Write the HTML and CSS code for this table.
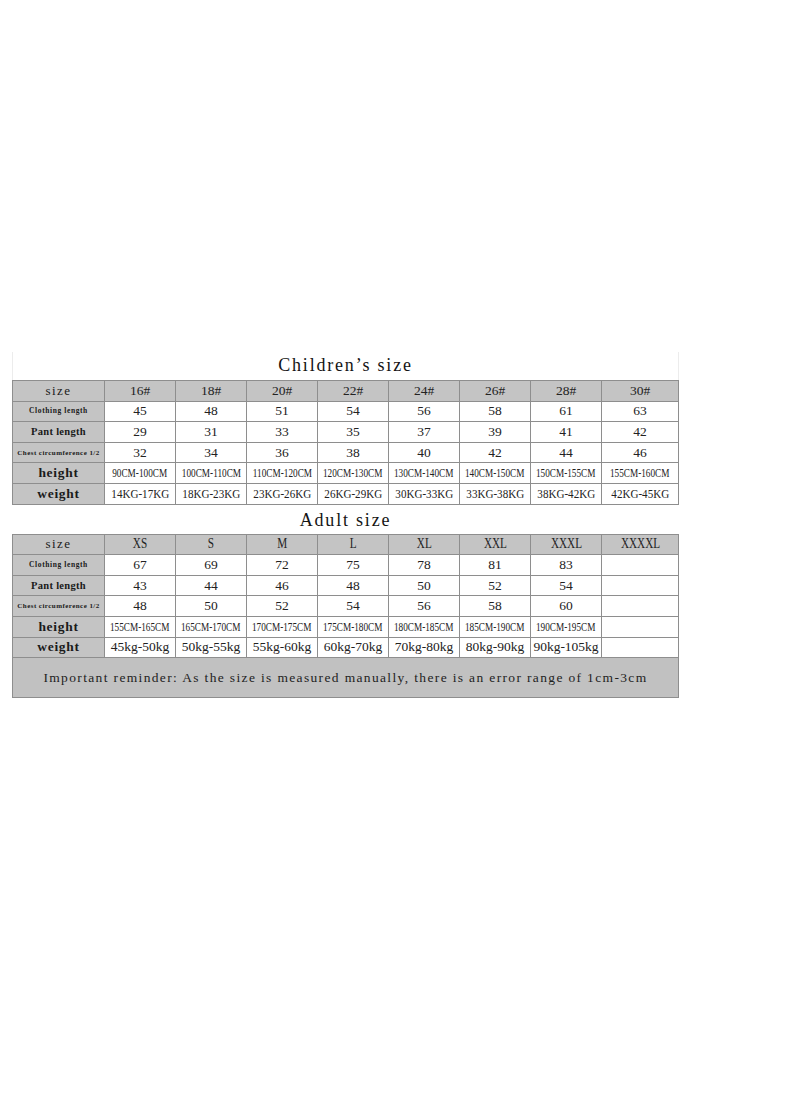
FILE: index.html
```html
<!DOCTYPE html>
<html>
<head>
<meta charset="utf-8">
<link rel="stylesheet" href="styles.css">
</head>
<body>
<div class="sheet">
  <div class="title kids-title">Children’s size</div>
  <div class="grid">
    <div class="cell hd lbl-size">size</div>
    <div class="cell hd">16#</div><div class="cell hd">18#</div><div class="cell hd">20#</div><div class="cell hd">22#</div><div class="cell hd">24#</div><div class="cell hd">26#</div><div class="cell hd">28#</div><div class="cell hd">30#</div>

    <div class="cell lbl lbl-cloth">Clothing length</div>
    <div class="cell">45</div><div class="cell">48</div><div class="cell">51</div><div class="cell">54</div><div class="cell">56</div><div class="cell">58</div><div class="cell">61</div><div class="cell">63</div>

    <div class="cell lbl lbl-pant">Pant length</div>
    <div class="cell">29</div><div class="cell">31</div><div class="cell">33</div><div class="cell">35</div><div class="cell">37</div><div class="cell">39</div><div class="cell">41</div><div class="cell">42</div>

    <div class="cell lbl lbl-chest">Chest circumference 1/2</div>
    <div class="cell">32</div><div class="cell">34</div><div class="cell">36</div><div class="cell">38</div><div class="cell">40</div><div class="cell">42</div><div class="cell">44</div><div class="cell">46</div>

    <div class="cell lbl lbl-big">height</div>
    <div class="cell"><span class="cm">90CM-100CM</span></div><div class="cell"><span class="cm">100CM-110CM</span></div><div class="cell"><span class="cm">110CM-120CM</span></div><div class="cell"><span class="cm">120CM-130CM</span></div><div class="cell"><span class="cm">130CM-140CM</span></div><div class="cell"><span class="cm">140CM-150CM</span></div><div class="cell"><span class="cm">150CM-155CM</span></div><div class="cell"><span class="cm">155CM-160CM</span></div>

    <div class="cell lbl lbl-big">weight</div>
    <div class="cell"><span class="kg">14KG-17KG</span></div><div class="cell"><span class="kg">18KG-23KG</span></div><div class="cell"><span class="kg">23KG-26KG</span></div><div class="cell"><span class="kg">26KG-29KG</span></div><div class="cell"><span class="kg">30KG-33KG</span></div><div class="cell"><span class="kg">33KG-38KG</span></div><div class="cell"><span class="kg">38KG-42KG</span></div><div class="cell"><span class="kg">42KG-45KG</span></div>
  </div>

  <div class="title adult-title">Adult size</div>
  <div class="grid">
    <div class="cell hd lbl-size">size</div>
    <div class="cell hd"><span class="let">XS</span></div><div class="cell hd"><span class="let">S</span></div><div class="cell hd"><span class="let">M</span></div><div class="cell hd"><span class="let">L</span></div><div class="cell hd"><span class="let">XL</span></div><div class="cell hd"><span class="let">XXL</span></div><div class="cell hd"><span class="let">XXXL</span></div><div class="cell hd"><span class="let">XXXXL</span></div>

    <div class="cell lbl lbl-cloth">Clothing length</div>
    <div class="cell">67</div><div class="cell">69</div><div class="cell">72</div><div class="cell">75</div><div class="cell">78</div><div class="cell">81</div><div class="cell">83</div><div class="cell"></div>

    <div class="cell lbl lbl-pant">Pant length</div>
    <div class="cell">43</div><div class="cell">44</div><div class="cell">46</div><div class="cell">48</div><div class="cell">50</div><div class="cell">52</div><div class="cell">54</div><div class="cell"></div>

    <div class="cell lbl lbl-chest">Chest circumference 1/2</div>
    <div class="cell">48</div><div class="cell">50</div><div class="cell">52</div><div class="cell">54</div><div class="cell">56</div><div class="cell">58</div><div class="cell">60</div><div class="cell"></div>

    <div class="cell lbl lbl-big">height</div>
    <div class="cell"><span class="cm">155CM-165CM</span></div><div class="cell"><span class="cm">165CM-170CM</span></div><div class="cell"><span class="cm">170CM-175CM</span></div><div class="cell"><span class="cm">175CM-180CM</span></div><div class="cell"><span class="cm">180CM-185CM</span></div><div class="cell"><span class="cm">185CM-190CM</span></div><div class="cell"><span class="cm">190CM-195CM</span></div><div class="cell"></div>

    <div class="cell lbl lbl-big">weight</div>
    <div class="cell">45kg-50kg</div><div class="cell">50kg-55kg</div><div class="cell">55kg-60kg</div><div class="cell">60kg-70kg</div><div class="cell">70kg-80kg</div><div class="cell">80kg-90kg</div><div class="cell">90kg-105kg</div><div class="cell"></div>

    <div class="cell note">Important reminder: As the size is measured manually, there is an error range of 1cm-3cm</div>
  </div>
</div>
</body>
</html>
```

FILE: styles.css
```css
html, body {
  margin: 0;
  padding: 0;
  background: #ffffff;
}

body {
  width: 800px;
  height: 1096px;
  font-family: "Liberation Serif", serif;
  color: #1e1e1e;
}

.sheet {
  width: 667px;
  margin: 352px 0 0 12px;
}

.title {
  display: flex;
  align-items: center;
  justify-content: center;
  font-family: "Liberation Serif", serif;
  font-size: 18px;
  letter-spacing: 1.8px;
  color: #141414;
}

.kids-title {
  height: 28px;
  border-left: 1px solid #ececec;
  border-right: 1px solid #ececec;
  padding-bottom: 1px;
  box-sizing: border-box;
}

.adult-title {
  height: 29px;
  padding-top: 3px;
  box-sizing: border-box;
}

.grid {
  display: grid;
  grid-template-columns: 91px repeat(7, 70px) 76px;
  grid-auto-rows: minmax(19.6px, auto);
  gap: 1px;
  border: 1px solid #8e8e8e;
  background: #8e8e8e;
}

.cell {
  display: flex;
  align-items: center;
  justify-content: center;
  background: #ffffff;
  white-space: nowrap;
  overflow: visible;
  font-size: 13.5px;
  line-height: 16px;
  color: #222222;
}

.hd {
  background: #c4c4c4;
}

.lbl {
  background: #c4c4c4;
  color: #1a1a1a;
}

.lbl-size {
  font-size: 13px;
  letter-spacing: 1.4px;
  color: #1a1a1a;
}

.lbl-cloth {
  font-size: 7.5px;
  font-weight: bold;
  letter-spacing: 0.6px;
}

.lbl-pant {
  font-size: 10.5px;
  font-weight: bold;
  letter-spacing: 0.3px;
}

.lbl-chest {
  font-size: 7px;
  font-weight: bold;
  letter-spacing: 0.45px;
}

.lbl-big {
  font-size: 13.5px;
  font-weight: bold;
  letter-spacing: 0.7px;
}

.let {
  display: inline-block;
  font-size: 14px;
  transform: scaleX(0.8);
}

.cm {
  display: inline-block;
  font-size: 12px;
  transform: scaleX(0.77);
}

.kg {
  display: inline-block;
  font-size: 13.5px;
  transform: scaleX(0.82);
}

.note {
  grid-column: 1 / -1;
  height: 39px;
  background: #c1c1c1;
  font-size: 13.5px;
  letter-spacing: 1.35px;
  color: #1e1e1e;
}
```
